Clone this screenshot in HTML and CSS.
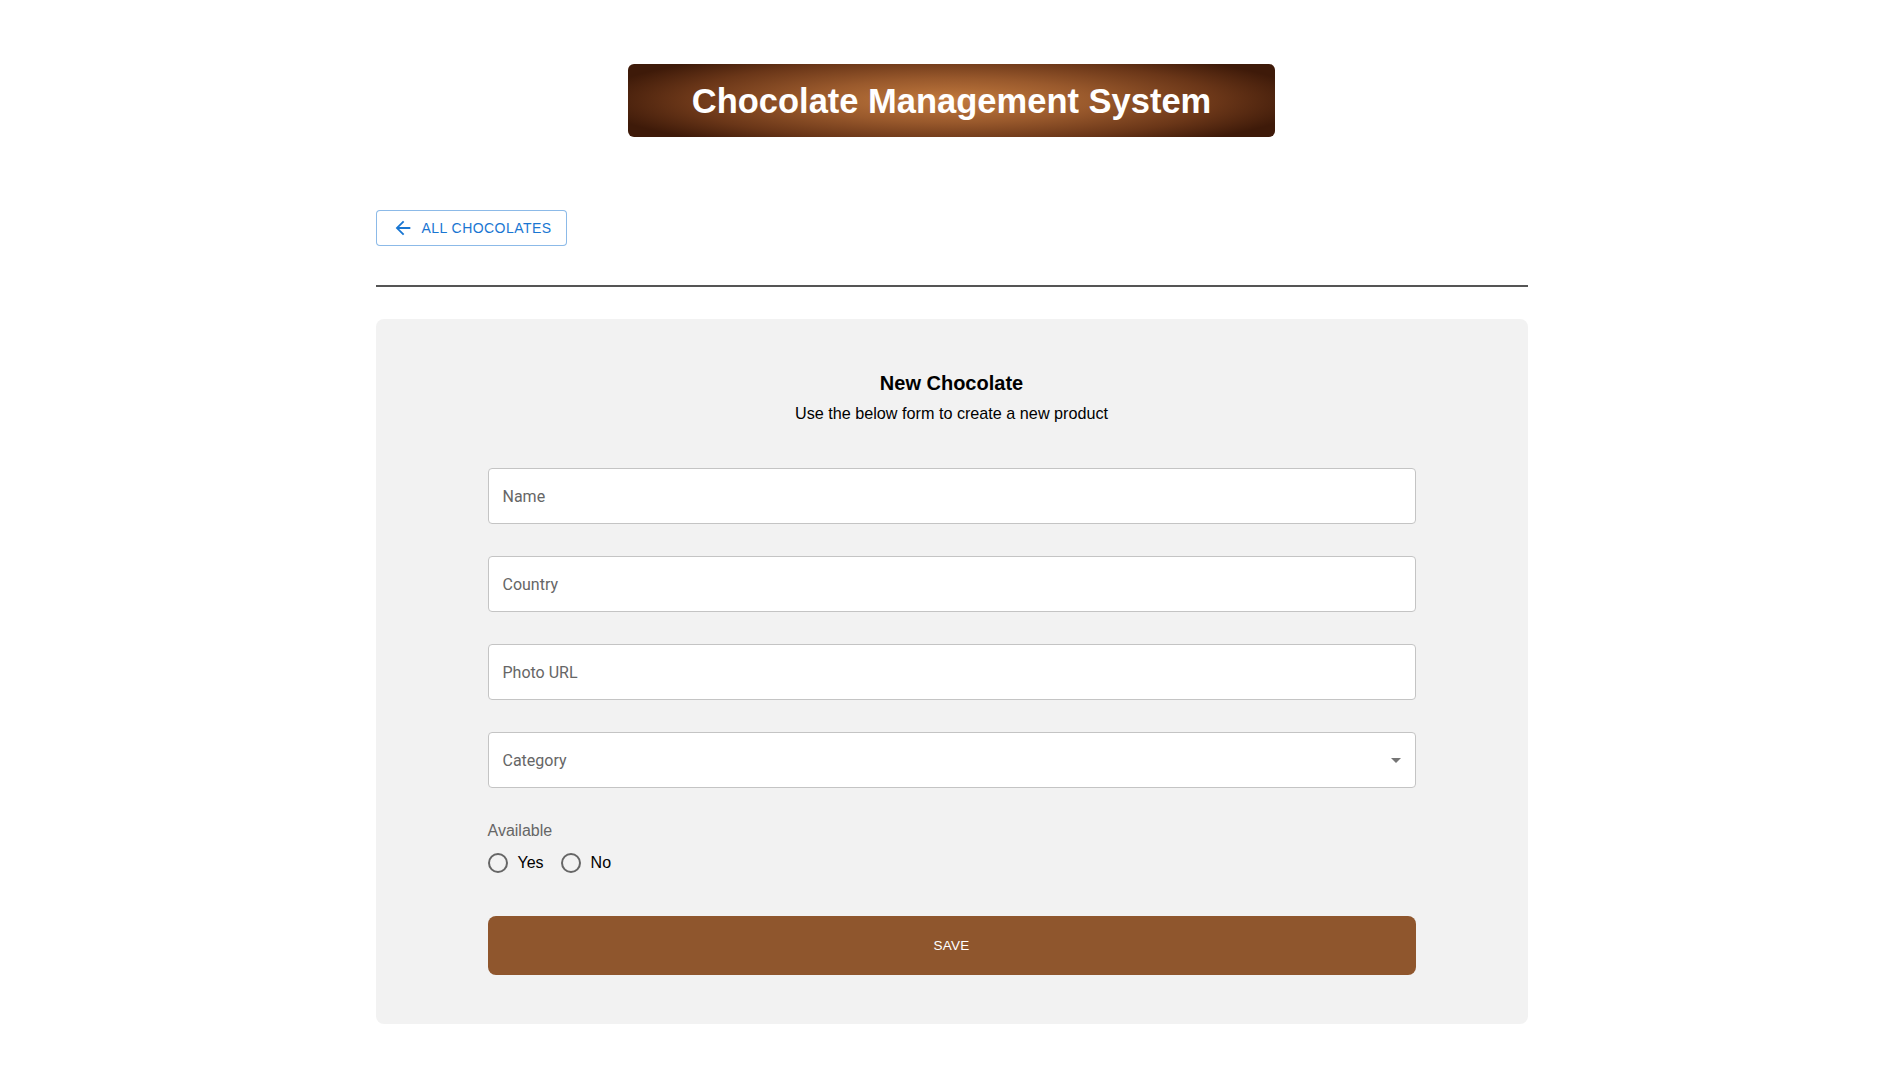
FILE: index.html
```html
<!DOCTYPE html>
<html lang="en">
<head>
<meta charset="utf-8">
<title>Chocolate Management System</title>
<link rel="stylesheet" href="styles.css">
</head>
<body>
<header class="header">
  <h1 class="banner">Chocolate Management System</h1>
</header>
<main class="container">
  <div class="toolbar">
    <button class="back-btn" type="button">
      <svg class="back-icon" viewBox="0 0 24 24" width="22" height="22" aria-hidden="true"><path fill="currentColor" d="M20 11H7.83l5.59-5.59L12 4l-8 8 8 8 1.41-1.41L7.83 13H20v-2z"/></svg>
      <span>ALL CHOCOLATES</span>
    </button>
  </div>
  <hr class="divider">
  <section class="card">
    <h2 class="card-title">New Chocolate</h2>
    <p class="card-sub">Use the below form to create a new product</p>
    <form class="form">
      <div class="field"><span class="placeholder">Name</span></div>
      <div class="field"><span class="placeholder">Country</span></div>
      <div class="field"><span class="placeholder">Photo URL</span></div>
      <div class="field select"><span class="placeholder">Category</span>
        <svg class="caret" viewBox="0 0 24 24" width="24" height="24" aria-hidden="true"><path fill="currentColor" d="M7 10l5 5 5-5z"/></svg>
      </div>
      <div class="radio-group">
        <div class="radio-label">Available</div>
        <div class="radio-row">
          <label class="radio"><span class="circle"></span><span>Yes</span></label>
          <label class="radio"><span class="circle"></span><span>No</span></label>
        </div>
      </div>
      <button class="save-btn" type="button">SAVE</button>
    </form>
  </section>
</main>
</body>
</html>
```

FILE: styles.css
```css
* { box-sizing: border-box; }
body {
  margin: 0;
  font-family: "Liberation Sans", Arial, sans-serif;
  background: #ffffff;
  color: #000;
}
.header {
  display: flex;
  justify-content: center;
  padding-top: 64px;
}
.banner {
  margin: 0;
  width: 647px;
  height: 73px;
  padding-top: 2px;
  display: flex;
  align-items: center;
  justify-content: center;
  border-radius: 6px;
  color: #fff;
  font-size: 34.5px;
  font-weight: 700;
  background: radial-gradient(ellipse 55% 75% at 50% 50%, #c27a3e 0%, #99592c 40%, #6a3618 75%, #3e1a09 100%);
}
.container {
  width: 1152px;
  margin: 0 auto;
  padding-top: 73px;
  padding-bottom: 20px;
}
.toolbar { display: flex; }
.back-btn {
  display: inline-flex;
  align-items: center;
  gap: 8px;
  height: 36px;
  padding: 0 14px 0 15px;
  border: 1px solid rgba(25, 118, 210, 0.5);
  border-radius: 4px;
  background: #fff;
  color: #1976d2;
  font-family: "Liberation Sans", Arial, sans-serif;
  font-size: 14px;
  letter-spacing: 0.45px;
  cursor: pointer;
}
.back-icon { display: block; }
.divider {
  margin: 39px 0 0;
  border: 0;
  border-top: 2px solid #555;
  height: 0;
}
.card {
  margin-top: 32px;
  background: #f2f2f2;
  border-radius: 8px;
  padding: 52px 112px 49px;
}
.card-title {
  margin: 0;
  text-align: center;
  font-size: 20px;
  line-height: 24px;
  font-weight: 700;
}
.card-sub {
  margin: 9px 0 0;
  text-align: center;
  font-size: 16.2px;
  line-height: 19px;
}
.form {
  margin-top: 45px;
  display: flex;
  flex-direction: column;
  gap: 32px;
}
.field {
  height: 56px;
  background: #fff;
  border: 1px solid #c4c4c4;
  border-radius: 4px;
  display: flex;
  align-items: center;
  padding: 0 14px;
  position: relative;
}
.placeholder {
  font-family: Roboto, "Liberation Sans", sans-serif;
  font-size: 16px;
  color: #666;
}
.select { justify-content: space-between; padding-right: 7px; }
.caret { color: #757575; display: block; }
.radio-group { display: flex; flex-direction: column; margin-top: 1px; }
.radio-label {
  font-size: 16px;
  line-height: 19px;
  color: #666;
}
.radio-row {
  display: flex;
  gap: 17px;
  height: 42px;
  align-items: center;
  margin-top: 2px;
}
.radio {
  display: flex;
  align-items: center;
  gap: 10px;
  font-size: 16px;
  color: #000;
}
.circle {
  width: 20px;
  height: 20px;
  border: 2px solid #666;
  border-radius: 50%;
  display: block;
}
.save-btn {
  margin-top: 0;
  height: 59px;
  border: 0;
  border-radius: 8px;
  background: #8f562d;
  color: #fff;
  font-family: "Liberation Sans", Arial, sans-serif;
  font-size: 13.5px;
  letter-spacing: 0.3px;
  cursor: pointer;
}
```
